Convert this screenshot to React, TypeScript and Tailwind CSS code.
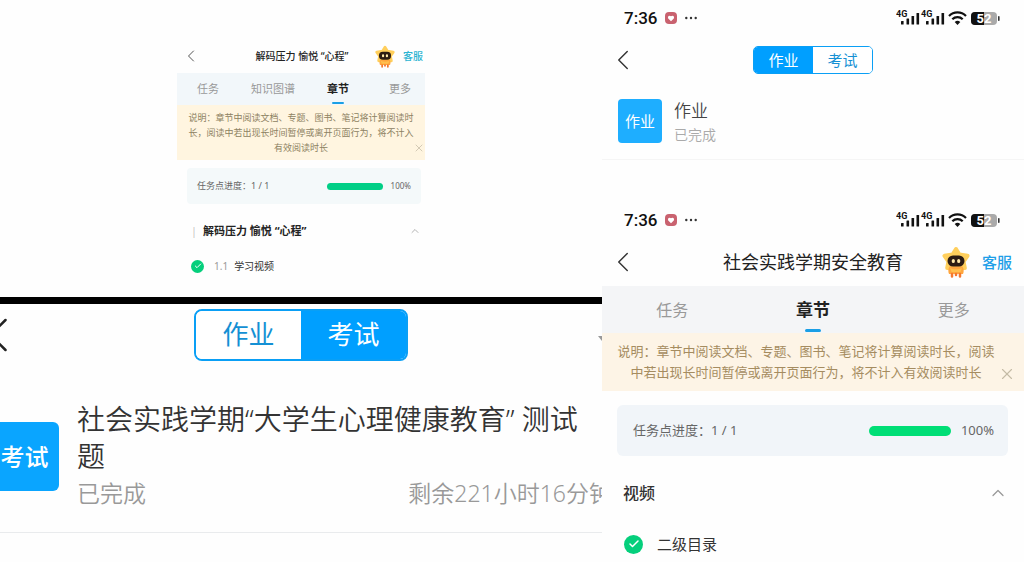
import React from "react";
import clsx from "clsx";
import { Check, ChevronLeft, ChevronUp, X } from "lucide-react";

const SignalBars = ({ x }: { x: number }) => (
  <g fill="#111">
    <text x={x} y="8" fontSize="9" fontWeight="700" fontFamily="Roboto, sans-serif">
      4G
    </text>
    <rect x={x + 5} y="12" width="2.6" height="3.5" rx="0.5" />
    <rect x={x + 10.5} y="9.5" width="2.6" height="6" rx="0.5" />
    <rect x={x + 15.5} y="7" width="2.6" height="8.5" rx="0.5" />
    <rect x={x + 20.5} y="4" width="2.6" height="11.5" rx="0.5" />
  </g>
);

const StatusBar = () => (
  <div className="flex h-9 items-center justify-between pr-6 pl-[22px] font-[Roboto,sans-serif]">
    <div className="flex items-center gap-2">
      <span className="text-[17px] leading-5 font-medium text-[#111]">7:36</span>
      <svg viewBox="0 0 12 12" className="h-3 w-3">
        <rect width="12" height="12" rx="4" fill="#c9626f" />
        <path d="M6 9.2 3.2 6.4a1.8 1.8 0 0 1 2.8-2.2 1.8 1.8 0 0 1 2.8 2.2z" fill="#fff" />
      </svg>
      <svg viewBox="0 0 12 4" className="h-1 w-3" fill="#333">
        <circle cx="1.3" cy="2" r="1.2" />
        <circle cx="6" cy="2" r="1.2" />
        <circle cx="10.7" cy="2" r="1.2" />
      </svg>
    </div>

    <svg viewBox="0 0 104 18" className="h-[18px] w-[104px]">
      <SignalBars x={0} />
      <SignalBars x={25} />
      {/* wifi */}
      <g fill="none" stroke="#111" strokeWidth="2.2">
        <path d="M53 7a12 12 0 0 1 17 0" />
        <path d="M56.3 10.3a7.4 7.4 0 0 1 10.4 0" />
      </g>
      <path d="M61.5 16 58.7 13.1a4 4 0 0 1 5.6 0z" fill="#111" />
      {/* battery */}
      <rect x="75" y="3" width="26" height="13" rx="4" fill="#aaa" />
      <path d="M79 3h9v13h-9a4 4 0 0 1-4-4V7a4 4 0 0 1 4-4z" fill="#111" />
      <rect x="102" y="7" width="1.6" height="5" rx="0.8" fill="#333" />
      <text
        x="88"
        y="14"
        fontSize="13"
        fontWeight="700"
        textAnchor="middle"
        fill="#fff"
        fontFamily="Roboto, sans-serif"
      >
        52
      </text>
    </svg>
  </div>
);

const Mascot = ({ className }: { className?: string }) => (
  <svg viewBox="0 0 28 32" className={className}>
    {/* star head */}
    <path
      d="M14 3 17.4 8.600l8.100 1.200-4 5.700 1.300 6.500H5.200l1.300-6.500-4-5.700 8.100-1.200z"
      fill="#ffcf5c"
      stroke="#ffcf5c"
      strokeWidth="4"
      strokeLinejoin="round"
    />
    {/* body */}
    <path d="M7.5 20.5h13c1.5 2.5 1.5 5 .5 7.5H7c-1-2.5-1-5 .5-7.5z" fill="#ffa63e" />
    <path d="M8 22c3.5 1.8 8.500 1.8 12 0l-1.500 4h-9z" fill="#ffc04e" />
    <path
      d="M10 28v2.500M14 28v1M18 28v2.500"
      stroke="#f4782f"
      strokeWidth="2.5"
      strokeLinecap="round"
    />
    {/* face */}
    <rect x="5.5" y="9.5" width="17" height="11" rx="5.5" fill="#2c1c12" />
    <rect x="9.8" y="13" width="3" height="4" rx="1.5" fill="#ffe9a8" />
    <rect x="15.2" y="13" width="3" height="4" rx="1.5" fill="#ffe9a8" />
  </svg>
);

type SegmentedProps = {
  active: "作业" | "考试";
  large?: boolean;
};

const Segmented = ({ active, large }: SegmentedProps) => (
  <div
    className={clsx(
      "flex overflow-hidden border-[#0a9ff5]",
      large ? "h-[52px] w-[214px] rounded-lg border-2" : "h-7 w-[120px] rounded-[5px] border"
    )}
  >
    {(["作业", "考试"] as const).map((label) => (
      <button
        key={label}
        className={clsx(
          "flex-1",
          large ? "text-[26px]" : "text-[15px]",
          label === active ? "bg-[#009fff] text-white" : "bg-white text-[#1490d4]"
        )}
      >
        {label}
      </button>
    ))}
  </div>
);

type CourseScreenProps = {
  title: string;
  tabs: string[];
  notice: string[];
  chapter: string;
  chapterMark?: string;
  lesson: string;
  lessonNo?: string;
  compact?: boolean;
};

const CourseScreen = ({
  title,
  tabs,
  notice,
  chapter,
  chapterMark,
  lesson,
  lessonNo,
  compact,
}: CourseScreenProps) => (
  <div>
    {/* Header */}
    <header
      className={clsx(
        "grid grid-cols-[1fr_auto_1fr] items-center",
        compact ? "h-[34px] pr-0.5 pl-1" : "h-12 px-3"
      )}
    >
      <button aria-label="返回" className={clsx("justify-self-start", !compact && "-ml-2")}>
        <ChevronLeft
          strokeWidth={1}
          className={clsx("text-[#333]", compact ? "h-5 w-5" : "h-[34px] w-[34px]")}
        />
      </button>
      <h1
        className={clsx(
          "whitespace-nowrap text-[#222]",
          compact ? "text-[10px] font-medium" : "text-lg"
        )}
      >
        {title}
      </h1>
      <div className={clsx("flex items-center justify-end", compact ? "gap-2" : "gap-3")}>
        <Mascot className={compact ? "h-[23px] w-5" : "h-8 w-7"} />
        <a
          href="#"
          className={clsx(
            "font-medium whitespace-nowrap",
            compact ? "text-[10px] text-[#2cb4d2]" : "text-[15px] text-[#1e9fe8]"
          )}
        >
          客服
        </a>
      </div>
    </header>

    {/* Tabs */}
    <nav
      className={clsx(
        compact
          ? "flex h-8 gap-8 bg-[#f2f7fa] pr-3.5 pl-5 text-[11px]"
          : "grid h-[47px] grid-cols-3 bg-[#f4f5f7] text-base"
      )}
    >
      {tabs.map((tab) => {
        const current = tab === "章节";
        return (
          <button
            key={tab}
            className={clsx(
              "relative last:ml-auto",
              !compact && "w-full",
              current ? "font-bold text-[#222]" : "text-[#999]",
              current && !compact && "text-[17px]"
            )}
          >
            {tab}
            {current && (
              <span
                className={clsx(
                  "absolute bottom-px left-1/2 -translate-x-1/2 rounded-full bg-[#1a9fe6]",
                  compact ? "h-0.5 w-3" : "h-[3px] w-4"
                )}
              />
            )}
          </button>
        );
      })}
    </nav>

    {/* Notice */}
    <div
      className={clsx(
        "relative text-center whitespace-nowrap",
        compact
          ? "bg-[#fff5e0] px-1.5 pt-[5px] pb-[5px] text-[9px] leading-[15px] text-[#8d8262]"
          : "bg-[#fdf4e6] pt-2 pr-7 pb-2 pl-3.5 text-[13px] leading-[21px] text-[#a58c60]"
      )}
    >
      {notice.map((line) => (
        <p key={line}>{line}</p>
      ))}
      <button
        aria-label="关闭"
        className={clsx("absolute", compact ? "right-0 bottom-1.5" : "right-2 bottom-2")}
      >
        <X
          strokeWidth={1.5}
          className={clsx("text-[#c4bba6]", compact ? "h-3 w-3" : "h-[18px] w-[18px]")}
        />
      </button>
    </div>

    {/* Progress */}
    <div
      className={clsx(
        "flex items-center",
        compact
          ? "mt-2 mr-1 ml-2.5 h-9 rounded-sm bg-[#f4f9fa] px-2.5 text-[9px] text-[#666]"
          : "mt-3.5 mr-4 ml-[15px] h-[51px] rounded-md bg-[#f1f5f9] pr-3.5 pl-4 text-[13px] text-[#666]"
      )}
    >
      <span>任务点进度：1 / 1</span>
      <div
        role="progressbar"
        aria-label="任务点进度"
        aria-valuenow={100}
        className={clsx(
          "ml-auto rounded-full",
          compact ? "mr-2 h-[7px] w-14 bg-[#00cf86]" : "mr-2.5 h-2.5 w-[82px] bg-[#00de76]"
        )}
      />
      <span className={compact ? "text-[8px]" : "text-[13px]"}>100%</span>
    </div>

    {/* Chapter */}
    <button
      className={clsx(
        "flex w-full items-center",
        compact
          ? "mt-2.5 h-[34px] pr-1 pl-3.5 text-[11px] font-bold text-[#222]"
          : "mt-3 h-[50px] pr-4 pl-[21px] text-base font-medium text-[#333]"
      )}
    >
      {chapterMark && <span className="mr-1.5 font-light text-[#aaa]">{chapterMark}</span>}
      {chapter}
      <ChevronUp
        strokeWidth={1.5}
        className={clsx("ml-auto text-[#999]", compact ? "h-3 w-3" : "h-5 w-5")}
      />
    </button>

    <div
      className={clsx(
        "flex items-center text-[#333]",
        compact ? "mt-0.5 h-8 pl-3.5 text-[10px]" : "mt-2 h-9 pl-[22px] text-[15px]"
      )}
    >
      <span
        className={clsx(
          "grid place-items-center rounded-full bg-[#05cf7c]",
          compact ? "mr-2.5 h-[13px] w-[13px]" : "mr-3.5 h-[19px] w-[19px]"
        )}
      >
        <Check strokeWidth={3} className={clsx("text-white", compact ? "h-2 w-2" : "h-3 w-3")} />
      </span>
      {lessonNo && <span className="mr-1.5 text-[#999]">{lessonNo}</span>}
      {lesson}
    </div>
  </div>
);

const App = () => {
  return (
    <div className="grid min-h-screen grid-cols-[602fr_422fr] bg-[#fefefe] font-['Noto_Sans','Noto_Sans_CJK_SC',sans-serif]">
      <div className="flex min-w-0 flex-col overflow-hidden">
        <section className="min-h-[297px] pt-[39px]">
          <div className="mx-auto w-[248px]">
            <CourseScreen
              compact
              title="解码压力 愉悦 “心程”"
              tabs={["任务", "知识图谱", "章节", "更多"]}
              notice={[
                "说明：章节中阅读文档、专题、图书、笔记将计算阅读时",
                "长，阅读中若出现长时间暂停或离开页面行为，将不计入",
                "有效阅读时长",
              ]}
              chapterMark="|"
              chapter="解码压力 愉悦 “心程”"
              lessonNo="1.1"
              lesson="学习视频"
            />
          </div>
        </section>

        {/* Exam list */}
        <section className="flex-1 border-t-[7px] border-black">
          <header className="grid h-[61px] grid-cols-[1fr_auto_1fr] items-center">
            <button aria-label="返回" className="-ml-8 justify-self-start">
              <ChevronLeft strokeWidth={1} className="h-[60px] w-[60px] text-[#222]" />
            </button>
            <Segmented active="考试" large />
            <svg viewBox="0 0 8 5" className="mt-2 -mr-1 h-[5px] w-2 justify-self-end">
              <path d="M0 0h8L4 5z" fill="#999" />
            </svg>
          </header>
          <div className="flex items-center gap-[18px] border-b border-[#e9ebed] pt-9 pb-5">
            <div className="-ml-2.5 grid h-[69px] w-[69px] shrink-0 place-items-center rounded-md bg-[#0aa5ff] text-2xl font-medium text-white">
              考试
            </div>
            <div className="min-w-0 flex-1 leading-[37px]">
              <h2 className="text-[28px] font-[350] text-[#333]">
                社会实践学期“大学生心理健康教育” 测试题
              </h2>
              <div className="-mr-2.5 flex justify-between text-[23px] font-[350] whitespace-nowrap text-[#999]">
                <span>已完成</span>
                <span>剩余221小时16分钟</span>
              </div>
            </div>
          </div>
        </section>
      </div>

      <div className="min-w-0">
        {/* Homework list */}
        <section className="min-h-[202px]">
          <StatusBar />
          <header className="grid h-12 grid-cols-[1fr_auto_1fr] items-center px-1">
            <button aria-label="返回" className="justify-self-start">
              <ChevronLeft strokeWidth={1} className="h-[34px] w-[34px] text-[#333]" />
            </button>
            <Segmented active="作业" />
          </header>
          <div className="flex items-start gap-3 border-b border-[#f5f5f5] pt-[15px] pb-3 pl-4">
            <div className="grid h-11 w-11 place-items-center rounded bg-[#1eaeff] text-[15px] text-white">
              作业
            </div>
            <div>
              <h2 className="text-[17px] leading-6 font-[350] text-[#444]">作业</h2>
              <p className="text-sm leading-6 font-[350] text-[#aaa]">已完成</p>
            </div>
          </div>
        </section>

        <section>
          <StatusBar />
          <CourseScreen
            title="社会实践学期安全教育"
            tabs={["任务", "章节", "更多"]}
            notice={[
              "说明：章节中阅读文档、专题、图书、笔记将计算阅读时长，阅读",
              "中若出现长时间暂停或离开页面行为，将不计入有效阅读时长",
            ]}
            chapter="视频"
            lesson="二级目录"
          />
        </section>
      </div>
    </div>
  );
};

export default App;
